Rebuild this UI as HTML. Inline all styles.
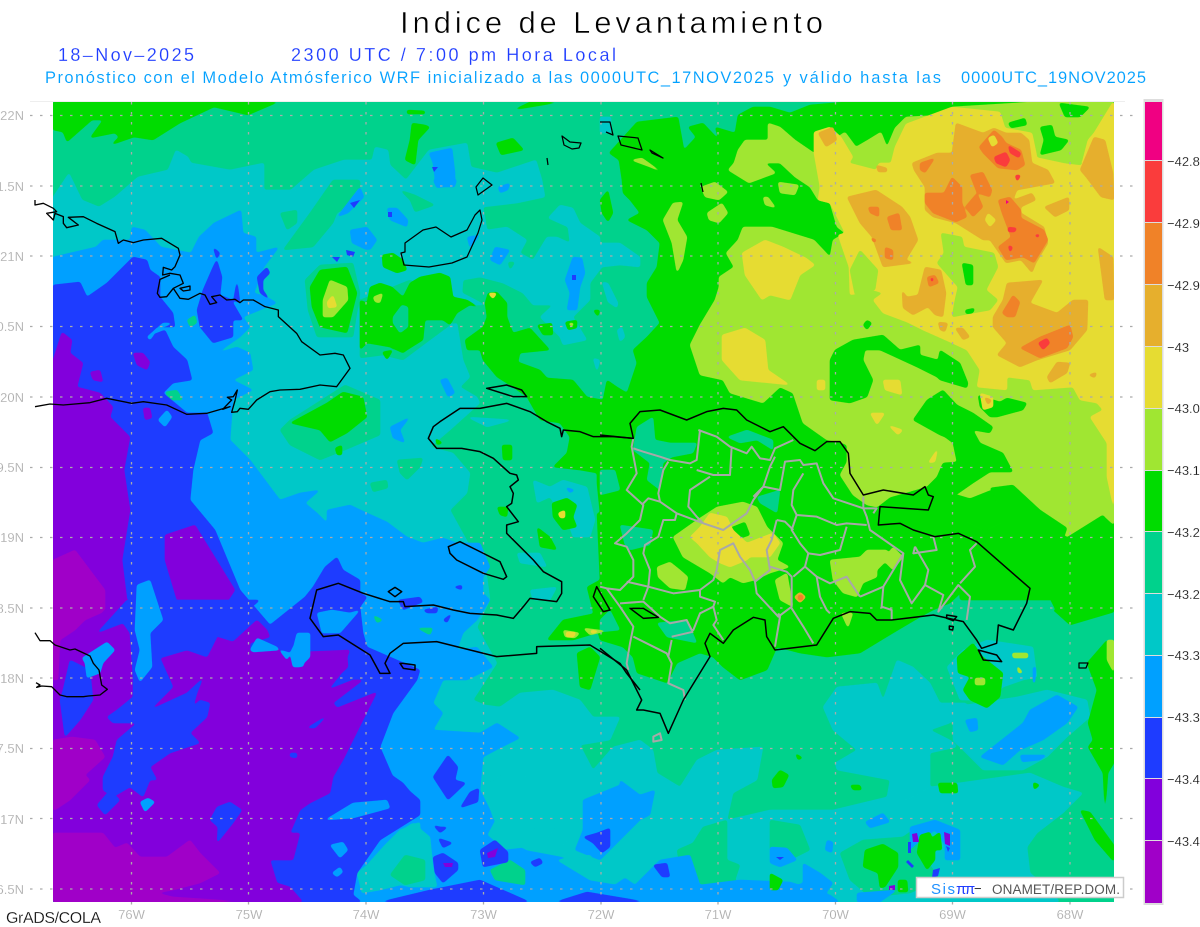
<!DOCTYPE html>
<html><head><meta charset="utf-8"><title>Indice de Levantamiento</title>
<style>html,body{margin:0;padding:0;background:#fff}svg{display:block}text{font-family:"Liberation Sans",sans-serif}</style></head>
<body>
<svg width="1200" height="927" viewBox="0 0 1200 927" xmlns="http://www.w3.org/2000/svg">
<defs>
<filter id="r" filterUnits="userSpaceOnUse" x="30" y="80" width="1110" height="840" color-interpolation-filters="sRGB">
<feGaussianBlur stdDeviation="1.3"/>
<feComponentTransfer><feFuncA type="linear" slope="6" intercept="-1.9"/></feComponentTransfer>
</filter>
</defs>
<rect width="1200" height="927" fill="#fff"/>
<text x="400" y="33" font-size="31" fill="#000" stroke="#fff" stroke-width=".55" textLength="423" lengthAdjust="spacing">Indice  de  Levantamiento</text>
<text x="58" y="61" font-size="18" fill="#1e3cff" stroke="#fff" stroke-width=".15" textLength="136" lengthAdjust="spacing">18–Nov–2025</text>
<text x="291" y="61" font-size="18" fill="#1e3cff" stroke="#fff" stroke-width=".15" textLength="325" lengthAdjust="spacing">2300 UTC / 7:00 pm Hora Local</text>
<text x="45" y="83" font-size="16.5" fill="#00a0ff" stroke="#fff" stroke-width=".1" textLength="729" lengthAdjust="spacing">Pronóstico con el Modelo Atmósferico WRF inicializado a las 0000UTC_17NOV2025</text>
<text x="783" y="83" font-size="16.5" fill="#00a0ff" stroke="#fff" stroke-width=".1" textLength="158" lengthAdjust="spacing">y válido hasta las</text>
<text x="961" y="83" font-size="16.5" fill="#00a0ff" stroke="#fff" stroke-width=".1" textLength="185" lengthAdjust="spacing">0000UTC_19NOV2025</text>
<line x1="30" y1="101.5" x2="1125" y2="101.5" stroke="#eee"/>
<svg x="53" y="102" width="1061" height="800" viewBox="53 102 1061 800">
<rect x="53" y="102" width="1061" height="800" fill="#00d28c"/>
<g fill="#00c8c8" filter="url(#r)">
<polygon points="53,197 69,173 82,200 99,207 115,197 138,177 168,170 176,150 188,157 191,163 230,170 264,163 264,190 291,190 314,170 344,160 372,160 375,147 388,150 390,165 406,180 429,150 467,143 471,167 497,173 536,160 542,180 545,197 517,203 483,207 487,230 507,227 527,240 520,253 533,260 547,237 557,237 570,243 568,227 548,218 560,205 573,208 580,223 600,237 600,243 620,243 640,257 640,267 620,265 602,267 590,283 590,300 573,317 587,340 563,345 560,337 540,317 553,305 533,305 523,293 503,283 480,277 463,280 462,293 470,297 485,305 470,305 457,313 450,325 457,323 463,360 470,377 460,387 477,397 480,403 450,430 430,447 453,453 470,473 467,493 450,510 487,577 490,600 477,627 497,663 473,700 485,705 500,707 520,693 553,690 580,700 593,717 620,717 610,740 580,745 593,770 613,747 640,740 653,750 657,773 680,787 697,760 717,750 763,747 757,780 733,793 727,820 770,810 833,810 887,797 907,800 930,787 1030,773 1063,787 1083,793 1063,813 1037,833 1027,847 1030,873 1047,887 1060,902 53,902"/>
<polygon points="823,707 837,687 877,683 883,700 897,660 913,667 930,683 940,703 967,703 950,723 930,730 950,740 957,747 930,753 930,787 907,800 887,797 890,780 837,770 835,763 857,750 833,730"/>
<polygon points="953,707 1017,697 1047,690 1087,700 1090,717 1067,737 1047,757 1023,770 983,770 953,740"/>
<polygon points="947,667 963,650 987,640 1033,647 1037,677 1023,680 1003,687 990,700 960,700"/>
<polygon points="600,117 611,117 611,133 600,133"/><polygon points="602,282 608,283 618,303 617,308 608,302"/><polygon points="617,330 622,327 625,337 620,342"/><polygon points="593,358 600,360 597,372"/>
<polygon points="533,480 550,487 563,480 587,487 595,520 590,537 573,537 570,528 550,497 537,503"/>
<polygon points="530,590 557,587 550,600 533,600"/><polygon points="467,417 513,420 487,427"/><polygon points="517,553 540,553 547,567 520,563"/>
<polygon points="600,455 625,455 640,480 628,490 600,480"/>
</g>
<g fill="#00d28c" filter="url(#r)">
<polygon points="677,850 693,843 703,827 727,820 727,860 740,865 735,880 760,900 700,900 680,867"/>
<polygon points="770,820 800,825 810,850 790,860 770,850"/>
<polygon points="840,853 863,840 903,837 917,827 925,830 920,850 940,880 910,893 870,897 850,880"/>
<polygon points="280,430 290,420 345,385 380,400 380,435 345,450 320,460 290,445"/>
<polygon points="397,460 423,458 420,467 407,480 400,473"/><polygon points="370,483 387,480 388,488 373,492"/>
<polygon points="280,213 297,210 297,223 287,230"/><polygon points="283,250 310,213 333,180 360,180 360,200 337,213 333,223 313,247"/>
<polygon points="305,280 320,265 353,263 360,293 353,337 317,337 308,310"/>
<polygon points="360,300 410,280 450,300 450,325 423,345 403,360 383,355 360,358"/>
<polygon points="400,190 415,195 435,205 415,212 410,200"/><polygon points="508,262 515,262 510,270"/>
</g>
<g fill="#00a0ff" filter="url(#r)">
<polygon points="53,257 96,247 103,240 130,240 132,227 145,230 161,247 191,253 199,237 214,223 241,210 243,233 256,237 256,253 279,247 264,267 254,293 267,297 277,303 243,317 250,327 240,337 217,353 237,347 250,353 253,370 233,380 253,390 233,400 230,440 250,460 280,500 300,493 320,490 305,503 317,513 327,523 327,510 350,505 367,513 387,522 407,537 423,543 443,538 457,543 480,543 490,567 483,577 483,593 490,600 477,620 463,633 457,650 477,647 493,667 467,680 443,680 433,703 443,713 433,730 480,733 497,723 520,738 500,748 483,757 480,790 495,820 487,835 505,850 523,848 535,850 560,850 565,860 590,865 615,885 625,878 635,885 660,860 690,855 700,885 740,880 790,882 830,895 840,902 53,902"/>
<polygon points="583,800 620,785 620,780 640,795 655,790 650,815 640,820 625,835 600,860 575,850 583,830"/>
<polygon points="770,847 787,848 797,860 780,867 770,863"/><polygon points="803,863 820,873 833,883 820,902 783,902 793,887 803,883"/>
<polygon points="865,822 883,813 890,822 870,828"/><polygon points="827,840 833,842 832,853 825,850"/>
<polygon points="910,827 935,820 960,830 960,860 945,860 945,845 935,830 915,845 910,850"/>
<polygon points="857,893 897,890 880,902 857,902"/>
<polygon points="980,757 1023,723 1030,710 1057,695 1078,707 1067,723 1043,740 1020,750 1003,765"/>
<polygon points="965,720 977,718 978,730 970,732"/><polygon points="1020,755 1047,755 1040,760 1022,762"/><polygon points="1033,667 1036,667 1035,683 1033,683"/>
<polygon points="337,217 360,187 364,197 348,213"/><polygon points="387,208 397,208 408,220 407,227 390,220"/><polygon points="350,230 367,227 377,240 367,250 352,243"/>
<polygon points="429,153 452,148 455,173 455,187 436,187 433,163"/><polygon points="565,280 573,257 582,258 585,273 580,287 577,310 567,310 570,293"/><polygon points="490,260 495,247 510,250 500,265"/><polygon points="467,237 480,235 470,248"/><polygon points="360,240 367,232 377,240 370,250 362,245"/><polygon points="433,180 457,180 455,185 437,188"/><polygon points="498,187 510,183 508,190 500,193"/>
<polygon points="390,427 410,417 400,430 405,443 393,438"/><polygon points="440,380 447,378 455,393 448,397"/>
<polygon points="565,487 575,490 570,493"/>
</g>
<g fill="#00c8c8" filter="url(#r)">
<polygon points="483,787 500,775 525,775 530,793 527,825 550,835 553,828 575,828 570,838 560,850 580,860 527,850 503,838 493,817"/>
<polygon points="357,873 367,865 385,845 400,830 420,822 420,880 380,890 362,893"/>
<polygon points="380,880 397,860 407,847 397,833 413,823 430,837 433,867 437,887 410,887"/>
<polygon points="557,860 590,855 610,880 620,885 590,880"/>
</g>
<g fill="#00d28c" filter="url(#r)"><polygon points="490,870 510,860 525,870 525,885 495,880"/><polygon points="390,875 405,855 425,860 425,880 405,885"/><polygon points="165,392 177,390 183,400 170,400"/><polygon points="187,320 195,315 197,323 190,327"/><polygon points="373,615 383,620 377,623"/><polygon points="417,628 433,628 430,635"/></g>
<g fill="#1e3cff" filter="url(#r)">
<polygon points="53,285 80,282 87,297 107,283 133,257 147,260 150,270 160,277 160,297 173,313 175,327 157,327 147,337 165,330 173,347 187,360 192,380 173,383 163,393 187,413 207,413 213,433 200,440 193,470 190,500 215,530 240,590 270,625 305,597 313,587 325,567 337,557 343,570 360,580 360,593 367,597 360,607 363,633 367,647 420,670 417,680 393,713 380,747 393,777 420,800 420,815 380,840 357,873 353,895 362,902 53,902"/>
<polygon points="213,247 220,253 213,267 203,290 200,300 197,310 200,327 213,343 233,337 233,320 243,320 233,303 237,280 240,303 220,295 222,277"/>
<polygon points="257,277 267,267 270,273 263,280 263,290 270,300 260,293"/>
<polygon points="398,600 420,597 423,602 403,610"/><polygon points="423,610 438,607 437,613 427,613"/><polygon points="443,620 452,613 447,623"/><polygon points="453,587 462,585 462,590"/>
<polygon points="380,767 403,783 417,800 390,810 380,810"/>
<polygon points="433,777 448,755 458,767 455,780 466,783 448,800"/><polygon points="460,808 470,792 479,788 478,802"/><polygon points="433,825 440,827 448,827 440,833"/><polygon points="438,838 453,843 443,848"/><polygon points="433,857 443,853 458,863 458,870 443,883 435,873"/><polygon points="480,850 495,840 508,852 508,862 483,867"/><polygon points="530,862 540,858 543,863 535,867"/><polygon points="583,837 597,833 610,828 610,847 602,853 593,843"/><polygon points="653,865 667,863 670,877 662,877"/>
<polygon points="380,902 430,890 480,880 530,902"/><polygon points="555,902 587,892 647,902"/>
</g>
<g fill="#8200dc" filter="url(#r)">
<polygon points="53,360 62,332 72,340 70,353 83,363 77,387 100,393 113,407 110,417 130,437 124,470 130,510 122,560 127,600 217,637 233,642 257,620 267,630 270,637 250,643 250,652 277,647 287,660 290,677 300,678 310,668 347,655 348,667 320,693 353,680 363,680 333,703 337,708 377,692 363,720 353,740 343,760 333,777 330,793 310,803 300,810 290,833 300,833 293,860 270,860 277,883 290,887 303,902 53,902"/>
<polygon points="165,535 195,525 235,590 225,605 205,615 185,605 177,600 165,560"/>
<polygon points="280,653 350,650 340,675 320,700 285,700"/>
<polygon points="133,353 143,353 150,362 147,370 137,365"/><polygon points="90,372 100,370 103,382 93,380"/><polygon points="143,408 150,408 152,418 145,420"/>
</g>
<g fill="#1e3cff" filter="url(#r)">
<polygon points="97,633 127,600 260,600 217,637 207,657 187,650 160,658 173,687 150,710 187,693 203,678 197,693 193,707 200,700 210,703 207,717 190,733 200,743 170,753 150,767 157,780 150,780 143,797 130,787 113,797 103,790 103,777 113,757 117,740 137,723 113,723 107,717 117,710 133,697 133,677 130,633 123,623"/>
<polygon points="63,690 70,660 90,670 93,700 80,720 65,737 60,700"/>
<polygon points="307,728 328,715 315,728"/><polygon points="217,807 230,802 242,810 233,823 217,843 218,827 210,820"/><polygon points="290,753 297,753 297,758 290,757"/>
</g>
<g fill="#00a0ff" filter="url(#r)">
<polygon points="137,585 150,580 163,620 150,633 152,667 140,682 135,670 140,650 135,630"/>
<polygon points="250,650 257,638 277,647 287,660 293,647 310,633 310,657 300,667 293,667 290,653 280,650 253,652"/>
<polygon points="82,658 107,642 115,650 103,663 100,673 87,678 85,663"/>
<polygon points="147,337 163,323 173,323 157,330 150,340"/><polygon points="158,420 167,410 172,417 165,427"/>
<polygon points="317,613 332,610 350,613 360,610 340,633 322,633"/><polygon points="292,653 297,633 310,633 303,667 293,663"/>
<polygon points="325,820 353,803 387,800 390,808 353,818"/><polygon points="330,845 343,842 348,850 340,858"/><polygon points="332,873 340,867 343,872 337,877"/>
<polygon points="140,802 148,798 155,802 145,812"/>
</g>
<g fill="#a000c8" filter="url(#r)">
<polygon points="53,600 100,600 103,612 85,620 75,630 60,640 58,680 53,680"/>
<polygon points="53,560 75,550 105,590 105,610 53,610"/>
<polygon points="53,740 72,737 95,740 105,757 85,775 90,780 70,800 55,810 53,810"/>
<polygon points="53,833 103,833 115,848 127,843 140,857 167,857 190,840 200,853 220,873 200,883 173,890 157,893 173,897 250,902 53,902"/>
</g>
<g fill="#1e3cff" filter="url(#r)"><polygon points="97,805 110,790 120,800 105,815"/></g>
<g fill="#00dc00" filter="url(#r)">
<polygon points="53,102 299,102 276,103 248,115 214,107 180,123 153,140 134,137 111,145 119,137 115,133 90,138 103,120 92,120 67,142 63,132 53,130"/>
<polygon points="513,110 555,103 560,102 530,102"/><polygon points="407,110 425,111 425,114 407,114"/>
<polygon points="412,123 425,125 430,127 418,140 415,165 405,160 410,140"/><polygon points="496,143 513,138 524,150 501,155"/>
<polygon points="382,255 393,253 403,260 407,270 397,273 383,267"/>
<polygon points="410,283 420,277 440,273 450,277 453,297 467,300 480,308 470,305 457,313 450,325 443,320 425,320 423,340 407,350 403,353 390,347 367,343 360,350 360,300 367,303 370,287 380,283 392,287 403,297"/>
<polygon points="290,423 327,403 343,392 363,397 367,417 347,433 330,442 320,430"/>
<polygon points="310,287 320,270 347,267 357,293 347,333 320,327 312,307"/>
<polygon points="335,448 342,445 342,455 337,455"/><polygon points="502,445 512,445 512,460 503,460"/><polygon points="435,438 443,443 437,445"/><polygon points="497,507 508,507 507,517 500,515"/>
<polygon points="600,200 608,190 613,213 608,222 602,213"/><polygon points="593,310 600,310 598,317"/><polygon points="537,325 552,323 553,335 543,335"/><polygon points="565,322 577,320 577,328 568,330"/><polygon points="382,352 393,350 387,360"/>
<polygon points="552,503 567,498 577,505 573,517 577,527 563,530 553,517"/><polygon points="537,527 550,537 557,550 540,547"/>
<polygon points="563,620 597,613 607,630 573,640 547,640"/><polygon points="577,653 590,647 600,657 590,690 580,687"/>
<polygon points="905,102 1114,102 1114,660 1107,640 1087,663 1097,690 1088,723 1093,740 1088,747 1103,773 1105,813 1108,773 1114,763 1114,560 1114,612 1070,625 1050,607 1033,593 1013,587 967,587 950,603 933,610 920,617 893,633 860,653 827,657 800,653 777,647 767,670 740,680 723,667 713,657 700,653 677,663 667,683 637,673 633,657 623,647 600,640 587,587 600,580 597,513 600,513 597,483 597,473 580,470 553,467 567,453 570,437 560,423 540,420 527,397 513,387 497,377 483,360 480,350 467,350 465,340 483,327 487,317 485,303 488,293 497,292 507,303 507,317 513,333 530,328 550,350 520,353 518,362 540,370 547,378 573,380 587,397 603,400 607,380 617,387 627,393 637,363 633,350 647,337 660,323 647,297 647,283 657,267 660,243 647,230 627,220 640,213 630,200 623,193 622,180 619,160 609,153 637,122 678,117 684,150 696,137 688,127 703,123 719,140 715,127 735,133 738,115 753,107 770,107 790,113 810,105 845,102"/>
<polygon points="772,780 780,770 789,775 783,787 773,788"/><polygon points="938,783 957,783 958,793 940,793"/><polygon points="850,785 860,785 862,790 853,790"/><polygon points="795,753 803,758 798,760"/>
<polygon points="957,657 973,643 983,657 1003,673 1000,697 987,708 970,700 963,690 970,677 958,673"/>
<polygon points="865,850 883,844 898,853 898,867 885,887 880,888 878,873 863,867"/><polygon points="920,835 930,832 935,847 935,860 927,870 917,853"/><polygon points="933,837 940,832 942,850 933,850"/><polygon points="898,880 907,880 908,892 898,892"/>
<polygon points="1080,810 1090,812 1114,845 1114,862 1095,840"/><polygon points="770,873 783,880 778,890 770,890"/>
<polygon points="1033,782 1040,785 1034,790"/>
</g>
<g fill="#00d28c" filter="url(#r)">
<polygon points="637,427 653,417 655,440 670,443 697,443 693,453 672,457 663,463 660,490 647,480 650,463 633,450"/>
<polygon points="727,437 747,430 773,440 773,450 757,440 740,443"/><polygon points="757,497 780,490 777,513 760,503"/>
<polygon points="620,525 653,530 650,545 630,550 625,545"/><polygon points="657,623 687,620 697,643 667,637"/>
<polygon points="393,317 402,305 408,307 408,327 400,333 393,323"/>
<polygon points="600,470 615,470 620,490 600,495"/><polygon points="600,620 610,610 620,630 600,632"/>
<polygon points="950,615 975,605 985,625 960,630"/><polygon points="1020,600 1045,590 1055,610 1030,625"/>
</g>
<g fill="#a0e632" filter="url(#r)">
<polygon points="1032,102 1114,102 1114,525 1103,515 1067,537 1040,510 1013,485 990,490 970,498 950,492 915,490 890,497 877,507 867,505 853,495 840,475 847,462 847,445 840,442 827,440 803,423 793,393 780,387 763,403 730,393 723,380 700,375 690,345 700,325 715,300 719,287 719,277 734,267 726,253 738,240 743,227 772,227 814,240 830,257 833,240 845,233 837,227 830,203 818,200 810,187 795,177 780,163 765,163 776,173 749,183 728,170 734,163 738,150 745,140 768,140 768,123 780,127 795,140 814,153 845,132 856,147 868,140 881,132 887,147 895,128 906,117 944,115 952,107"/>
<polygon points="663,220 673,203 683,202 677,220 687,237 683,260 677,273 672,243"/><polygon points="701,187 715,182 728,192 719,200 705,197"/><polygon points="707,213 722,203 728,213 719,223 709,220"/><polygon points="778,182 799,185 795,195 780,193"/><polygon points="763,197 768,197 776,208 765,205"/><polygon points="631,160 642,158 663,173 650,167"/>
<polygon points="673,537 697,520 717,507 743,502 757,507 767,527 783,543 777,560 790,567 770,573 755,580 743,583 730,577 723,583 710,573 683,557"/>
<polygon points="657,567 670,562 680,570 688,577 685,590 670,588 658,577"/><polygon points="775,580 787,573 793,607 780,600"/>
<polygon points="830,560 860,557 867,550 887,550 890,557 877,570 877,577 863,583 857,597 843,593 833,580"/><polygon points="893,547 903,557 893,570 883,560"/><polygon points="841,613 853,613 848,628"/>
<polygon points="323,300 330,280 347,287 348,300 333,317 323,317"/><polygon points="373,297 383,293 380,303 375,302"/><polygon points="568,323 574,323 572,327"/>
<polygon points="563,630 580,633 575,638 565,637"/><polygon points="583,628 607,631 590,635"/>
<polygon points="1012,653 1028,653 1028,658 1013,658"/><polygon points="1017,665 1023,673 1018,673"/><polygon points="975,678 985,678 985,685 975,685"/><polygon points="1107,640 1114,640 1114,673 1107,660"/>
</g>
<g fill="#00dc00" filter="url(#r)">
<polygon points="913,420 927,400 943,390 957,405 973,413 993,427 990,433 973,430 980,443 1003,453 1013,472 990,472 973,483 953,497 930,497 907,493 927,487 937,477 943,463 957,462 953,443 945,437 940,435"/>
<polygon points="853,340 883,335 900,350 920,345 920,355 938,360 940,350 960,363 968,383 967,388 940,380 937,377 917,367 880,350 865,350 863,360 873,380 867,397 850,403 830,400 830,360 835,350"/>
<polygon points="990,488 1013,485 1040,510 1067,528 1063,540 1103,515 1114,530 1114,600 960,600 955,525 965,520 985,530 1005,520 995,500"/>
<polygon points="978,395 1000,402 1007,398 1027,403 1023,410 997,417 990,417 980,407"/>
<polygon points="867,320 872,323 867,330 863,325"/>
<polygon points="730,528 745,522 750,535 735,540"/>
</g>
<g fill="#e6dc32" filter="url(#r)">
<polygon points="906,124 952,107 1000,112 1005,128 1032,133 1037,157 1065,163 1082,163 1088,140 1094,133 1113,102 1114,102 1114,510 1107,477 1107,443 1090,417 1103,410 1097,403 1080,400 1073,387 1033,390 1030,380 1007,377 1007,390 977,387 980,370 967,350 950,342 923,330 907,322 883,313 873,300 883,293 873,290 850,295 849,267 838,235 845,233 830,203 818,200 820,187 814,153 814,132 830,127 841,137 853,157 849,163 876,170 879,163 891,163 895,147"/>
<polygon points="742,253 765,240 783,247 806,258 815,265 800,275 790,300 770,295 762,300 745,275"/>
<polygon points="722,335 745,328 765,340 768,370 790,385 740,380 722,360"/>
<polygon points="690,537 700,527 710,513 727,517 733,530 747,543 773,533 780,543 770,557 750,557 747,560 730,567 720,563 710,557 697,543"/>
<polygon points="870,413 885,413 877,425"/><polygon points="888,425 903,430 898,435"/><polygon points="928,463 938,448 935,462"/>
<polygon points="817,380 825,380 825,390 817,390"/><polygon points="883,380 900,380 902,395 885,390"/><polygon points="980,393 993,397 993,407 983,410"/>
<polygon points="327,302 333,295 337,307 328,308"/><polygon points="558,513 565,510 565,518 560,518"/><polygon points="566,632 576,632 574,637 566,637"/><polygon points="590,630 600,631 592,634"/><polygon points="488,293 497,293 493,299"/>
</g>
<g fill="#a0e632" filter="url(#r)">
<polygon points="941,233 962,237 964,247 994,253 998,267 986,290 998,300 990,310 973,313 952,317 955,300 958,287 937,263 944,253"/>
<polygon points="1040,120 1055,122 1078,147 1082,165 1065,163 1037,157"/>
<polygon points="860,250 878,270 875,290 855,295 850,270"/>
</g>
<g fill="#00dc00" filter="url(#r)"><polygon points="962,263 973,265 973,285 966,285"/><polygon points="1008,123 1025,118 1027,125 1011,128"/><polygon points="1040,127 1052,125 1055,137 1069,140 1061,150 1040,155 1044,140"/><polygon points="1059,103 1090,107 1080,117 1065,117"/><polygon points="1011,133 1015,137 1011,139"/><polygon points="965,310 975,308 973,313 966,314"/></g>
<g fill="#e6af2d" filter="url(#r)">
<polygon points="912,163 937,153 952,153 956,123 983,133 994,128 1006,133 1021,133 1029,140 1032,163 1048,170 1055,183 1017,190 1013,200 1032,193 1036,200 1021,207 1021,213 1044,227 1048,243 1036,263 1032,273 1021,260 1006,263 990,240 983,240 956,223 933,217 925,210 925,187 914,170"/>
<polygon points="847,197 876,190 902,207 910,217 918,240 906,260 914,263 883,267 872,237 860,223"/>
<polygon points="1080,170 1094,137 1105,140 1113,173 1114,200 1101,197 1086,177"/><polygon points="1098,247 1113,257 1114,300 1105,300"/><polygon points="1044,207 1069,197 1069,210 1055,217"/>
<polygon points="993,317 1003,300 1007,283 1043,280 1030,303 1057,313 1073,300 1088,300 1087,330 1070,350 1037,360 1020,367 997,355 1007,343 993,327"/>
<polygon points="902,290 907,297 918,295 925,267 941,270 946,293 943,317 935,315 928,307 913,315 903,308"/>
<polygon points="955,328 963,328 970,337 963,340"/><polygon points="1047,377 1057,362 1070,363 1067,373 1050,383"/><polygon points="1088,375 1097,372 1095,378"/><polygon points="938,322 948,323 945,332 940,330"/>
<polygon points="818,133 833,127 837,140 826,147"/><polygon points="876,165 887,168 887,172 878,172"/><polygon points="800,592 806,597 800,603 794,597"/><polygon points="984,397 992,400 988,405"/>
</g>
<g fill="#f08228" filter="url(#r)">
<polygon points="925,193 944,193 952,177 962,187 962,203 967,217 956,222 933,213 925,203"/><polygon points="920,163 935,158 925,173 920,170"/><polygon points="970,175 983,172 992,190 990,197 977,193"/><polygon points="965,207 977,193 983,207 973,217"/>
<polygon points="979,147 994,130 1002,137 1006,143 1021,150 1025,165 1017,170 998,168 983,153"/>
<polygon points="998,200 1010,197 1021,210 1021,218 1044,230 1048,240 1034,263 1023,257 1006,260 998,247 1011,237 1002,213"/>
<polygon points="885,247 893,250 893,260 885,258"/><polygon points="868,207 879,207 879,217 870,213"/><polygon points="887,217 899,213 902,230 891,230"/><polygon points="870,237 877,240 874,243"/>
<polygon points="1020,348 1040,337 1070,325 1073,337 1067,348 1040,358"/><polygon points="1002,313 1013,295 1020,302 1015,317 1007,317"/><polygon points="927,277 935,275 939,283 929,287"/>
<polygon points="798,595 803,595 803,600 798,600"/>
</g>
<g fill="#e6dc32" filter="url(#r)"><polygon points="988,213 996,220 990,227 985,220"/><polygon points="988,138 994,135 998,143 992,147"/></g>
<g fill="#fa3c3c" filter="url(#r)">
<polygon points="994,157 1006,152 1010,160 1006,167 996,163"/><polygon points="1008,145 1021,153 1019,158 1010,153"/><polygon points="1015,175 1021,175 1017,182"/><polygon points="1008,227 1017,228 1015,232 1008,232"/><polygon points="1008,245 1013,247 1010,253"/><polygon points="1034,235 1040,234 1038,238"/><polygon points="1038,343 1047,338 1050,343 1043,350"/><polygon points="930,278 934,278 932,283"/>
</g>
<polygon points="1006,200 1009,202 1006,204" fill="#f00082"/>
<g fill="#8200dc"><polygon points="912,834 917,833 919,842 913,842"/><polygon points="944,832 950,834 950,846 945,844"/><polygon points="443,863 453,863 452,867 445,867"/><polygon points="487,853 498,848 495,857 488,858"/><polygon points="889,886 895,885 895,890 889,890"/></g>
<g fill="#1e3cff"><polygon points="908,842 911,842 911,853 908,853"/><polygon points="946,846 950,848 948,852"/><polygon points="908,860 914,866 912,868 906,862"/><polygon points="933,870 940,868 938,876 932,878"/><polygon points="346,250 355,252 353,257 347,255"/><polygon points="332,257 340,257 337,262"/><polygon points="350,203 360,200 354,208"/><polygon points="388,212 392,212 392,217 388,217"/><polygon points="432,167 438,167 434,172"/><polygon points="572,275 576,275 576,280 572,280"/><polygon points="776,857 784,857 780,860"/></g>
</svg>
<g fill="none" stroke="#aaa" stroke-width="1.3" stroke-dasharray="2.5 7.5">
<path d="M30 115.5H1134M30 186H1134M30 256H1134M30 326.5H1134M30 397H1134M30 467.5H1134M30 537.5H1134M30 608H1134M30 678H1134M30 748.5H1134M30 818.5H1134M30 889H1134"/>
<path d="M131.5 102V908M248.5 102V908M366 102V908M483.5 102V908M601 102V908M718 102V908M835.5 102V908M952.5 102V908M1070 102V908"/>
</g>
<g fill="#aaa" font-size="13" text-anchor="end" stroke="#fff" stroke-width=".15">
<text x="24" y="120">22N</text><text x="24" y="191">1.5N</text><text x="24" y="261">21N</text><text x="24" y="331">0.5N</text><text x="24" y="402">20N</text><text x="24" y="472">9.5N</text><text x="24" y="542">19N</text><text x="24" y="613">8.5N</text><text x="24" y="683">18N</text><text x="24" y="753">7.5N</text><text x="24" y="824">17N</text><text x="24" y="894">6.5N</text>
</g>
<g fill="#aaa" font-size="13" text-anchor="middle" stroke="#fff" stroke-width=".15">
<text x="131.5" y="919">76W</text><text x="249" y="919">75W</text><text x="366" y="919">74W</text><text x="483.5" y="919">73W</text><text x="601" y="919">72W</text><text x="718" y="919">71W</text><text x="835.5" y="919">70W</text><text x="952.5" y="919">69W</text><text x="1070" y="919">68W</text>
</g>
<text x="6" y="923" font-size="16" fill="#111" stroke="#fff" stroke-width=".2" textLength="95" lengthAdjust="spacing">GrADS/COLA</text>
<g transform="translate(600 380) scale(.33333)" fill="none" stroke="#a8a8a8" stroke-width="6" stroke-linejoin="round">
<path d="M100 175L95 200 110 280 80 330 130 375 120 420 80 460 45 490 80 500 100 540 100 590 60 630 20 625 0 620M20 625L60 680 100 740 90 790 80 850 85 870"/>
<path d="M100 205L130 215 180 230 210 240 270 250 290 240 300 150M295 150L350 170 390 200 440 220 455 200 480 235 510 240 525 205 580 180"/>
<path d="M290 270L340 285 390 285 395 200M330 290L270 330 265 380 290 410 310 430 230 400 180 365 145 355 125 375M205 245L190 270 175 340 180 365"/>
<path d="M230 400L225 420 190 420 175 470 135 495 130 520 150 570 145 620 130 660M80 605L145 620 220 640 300 630 340 600 350 570 360 510 400 490 420 530 450 570 465 605"/>
<path d="M310 430L370 450 440 400 460 360 490 320 510 260 525 230M460 350L490 320 540 330 555 245 600 240 610 255 650 250 670 310 700 355 790 385 800 410 810 450 910 520 880 570 850 620 780 650"/>
<path d="M610 280L580 330 575 375 590 405 650 410 710 435 740 430 800 435M590 405L575 450 600 490 625 520 615 560 650 590 690 610 740 590 780 650M625 520L660 525 720 510 740 440"/>
<path d="M530 420L515 480 500 510 510 570 465 605 470 640 535 710 575 680 575 590 560 575 510 560M575 685L610 740 640 790M535 700L540 710 525 800M615 560L580 590M650 590L660 650 680 690 690 700"/>
<path d="M850 620L845 680 875 690 875 720M910 520L900 600 935 670 975 615 1030 645 1015 695 1075 615 1110 650 1100 720M945 500L985 570 975 615M945 500L940 520 1010 510 1000 470M1130 490L1110 510 1125 560 1080 610"/>
<path d="M60 670L130 665 180 710 210 730 260 720 275 750 280 750 300 700 340 680 350 720 340 735 370 780M100 770L200 820 215 850 205 910 250 930 255 960M215 780L205 830M215 770L280 755M300 630L300 650 345 665 340 680M530 420L555 425 580 450M790 350L790 385 830 385 820 400"/>
<path d="M160 1070L180 1060 185 1080 160 1085Z"/>
</g>
<g fill="none" stroke="#000" stroke-width="1.25" stroke-linejoin="round">
<g transform="translate(0 180) scale(.33333)" stroke-width="4">
<path d="M105 60L105 75 130 70 160 85 170 95 140 100 160 120 165 100 190 110 190 130 200 143 235 135 205 112 250 110 290 130 345 155 355 190 370 180 400 188 430 180 485 175 510 190 535 205 540 225 525 260 515 270 490 262 488 285 510 280 540 285 550 310 520 325 500 350 480 352 472 340 480 298 510 285M540 325L570 318 570 330 550 333ZM520 325L540 355 565 358 600 340 615 345 630 373 650 368 635 350 660 345 680 360 705 358 720 368 730 360 760 360 795 380 835 390 835 410 890 460 905 485 960 525 1005 520 1030 525 1050 565 1010 620 960 615 900 628 840 630 810 635 770 660 745 688 720 685 712 695 695 697 705 662 712 630 700 650 682 652 695 660 668 688 690 680 620 700 560 703 500 675 430 665 395 670 320 655 270 668 190 675 150 672 105 680"/>
</g>
<g transform="translate(0 600) scale(.33333)" stroke-width="4">
<path d="M105 98L120 122 150 122 165 135 210 150 225 147 270 168 280 190 297 210 305 255 322 268 300 285 265 288 250 290 200 290 180 285 155 260 125 258 110 262 120 255 108 248"/>
</g>
<path d="M562 136L564 145 572 149 579 148 581 143 570 142ZM547 158L548 165M483 178L492 185 478 195 476 187ZM480 210L482 220 478 233 467 257 452 263 429 267 404 265 401 253 405 252 405 243 423 230 436 227 451 237 467 230 475 215ZM600 122L610 122 613 135 606 132M618 136L638 138 642 150 621 145ZM650 150L663 158 652 153ZM701 183L703 192M1079 663L1088 663 1086 668 1079 668Z"/>
<g transform="translate(280 380) scale(.33333)" stroke-width="4.5">
<path d="M620 25L680 15 725 30 740 50 700 50ZM1060 175L1000 170 940 170 900 155 850 150 845 170 840 145 800 125 750 95 680 70 600 85 540 85 480 125 460 140 445 175 470 205 530 205 545 205 600 215 640 235 690 280 710 285 715 300 690 320 700 340 695 370 680 380 715 425 680 435 680 460 710 490 760 540 790 575 845 605 845 640 830 665 750 655 730 680 700 715 650 705 570 700 520 690 460 675 375 680 370 665 330 665 250 640 175 610 110 630 90 715 130 770 175 765 270 825 300 880 330 880 315 850 330 820 370 790 470 785 530 800 650 830 770 820 770 800 930 795 1020 850 1040 880 1080 930"/>
<path d="M505 500L540 485 590 510 660 545 680 590 670 598 610 580 530 540 510 520ZM325 635L345 622 365 635 345 650ZM360 850L370 850 405 855 405 870 370 865ZM940 650L950 620 990 690 970 695Z"/>
</g>
<g transform="translate(600 380) scale(.33333)" stroke-width="4.5">
<path d="M0 165L100 175 90 130 120 95 180 90 260 120 320 95 370 85 410 90 440 120 510 155 550 140 600 190 645 212 680 185 720 185 745 220 750 280 790 345 850 330 940 345 975 320 985 345 1000 350 985 390 840 380 835 435 900 430 940 450 1005 470 1075 460 1130 485 1290 625 1280 670 1240 750 1195 735 1190 790 1145 805 1130 780 1090 725 1000 705 875 720 830 720 810 700 750 695 700 715 650 795 525 810 500 770 495 720 460 712 400 750 370 790 330 760 315 790 330 830 250 960 205 1060 180 1000 130 990 110 990 125 960 80 870 0 805"/>
<path d="M1135 810L1190 825 1205 845 1150 840ZM1040 705L1070 710 1060 722 1040 715ZM1048 738L1060 740 1058 750 1048 748ZM90 685L130 685 175 712 130 715Z"/>
</g>
</g>
<rect x="1143.5" y="99" width="20" height="806" fill="#ddd"/>
<rect x="1145" y="102" width="17" height="58" fill="#f00082"/>
<rect x="1145" y="161" width="17" height="61" fill="#fa3c3c"/>
<rect x="1145" y="223" width="17" height="61" fill="#f08228"/>
<rect x="1145" y="285" width="17" height="61" fill="#e6af2d"/>
<rect x="1145" y="347" width="17" height="61" fill="#e6dc32"/>
<rect x="1145" y="409" width="17" height="61" fill="#a0e632"/>
<rect x="1145" y="471" width="17" height="60" fill="#00dc00"/>
<rect x="1145" y="532" width="17" height="61" fill="#00d28c"/>
<rect x="1145" y="594" width="17" height="61" fill="#00c8c8"/>
<rect x="1145" y="656" width="17" height="61" fill="#00a0ff"/>
<rect x="1145" y="718" width="17" height="60" fill="#1e3cff"/>
<rect x="1145" y="779" width="17" height="61" fill="#8200dc"/>
<rect x="1145" y="841" width="17" height="62" fill="#a000c8"/>
<g font-size="13" fill="#111" stroke="#fff" stroke-width=".15">
<text x="1167" y="166">−42.87</text><text x="1167" y="228">−42.91</text><text x="1167" y="290">−42.96</text><text x="1167" y="352">−43</text><text x="1167" y="413">−43.05</text><text x="1167" y="475">−43.10</text><text x="1167" y="537">−43.25</text><text x="1167" y="599">−43.29</text><text x="1167" y="660">−43.34</text><text x="1167" y="722">−43.38</text><text x="1167" y="784">−43.43</text><text x="1167" y="846">−43.47</text>
</g>
<rect x="916.5" y="877.5" width="207" height="20" fill="#fff" stroke="#ccc" stroke-width="1.5"/>
<text x="931" y="894" font-size="15" fill="#1e90ff" textLength="24" lengthAdjust="spacing">Sis</text>
<text x="956" y="894" font-size="15" fill="#1e3cff" letter-spacing="-1.5">ππ</text>
<text x="974" y="893" font-size="13" fill="#222">−</text>
<text x="992" y="894" font-size="13.5" fill="#555" textLength="128" lengthAdjust="spacing">ONAMET/REP.DOM.</text>
</svg>
</body></html>
